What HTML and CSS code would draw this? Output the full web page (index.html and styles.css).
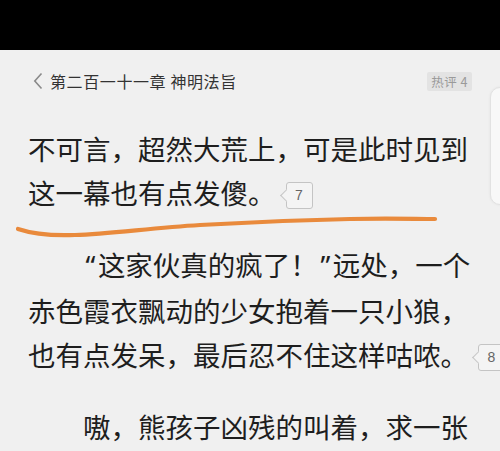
FILE: index.html
```html
<!DOCTYPE html>
<html lang="zh-CN">
<head>
<meta charset="utf-8">
<link rel="stylesheet" href="styles.css">
</head>
<body>
<div class="statusbar"></div>
<div class="header">
  <svg class="back" width="10" height="18" viewBox="0 0 10 18"><path d="M8.5 1.5 L1.8 9 L8.5 16.5" fill="none" stroke="#8a8a8a" stroke-width="1.6"/></svg>
  <span class="title">第二百一十一章 神明法旨</span>
  <span class="hot">热评 4</span>
</div>
<div class="content">
  <p class="para">不可言，超然大荒上，可是此时见到<br>这一幕也有点发傻。<span class="note">7</span></p>
  <p class="para indent"><span class="q">“</span>这家伙真的疯了！<span class="q">”</span>远处，一个<br>赤色霞衣飘动的少女抱着一只小狼，<br>也有点发呆，最后忍不住这样咕哝。<span class="note">8</span></p>
  <p class="para indent">嗷，熊孩子凶残的叫着，求一张</p>
</div>
<div class="sidepanel"></div>
<svg class="scribble" width="500" height="451" viewBox="0 0 500 451">
  <path d="M18 229 C 30 233, 50 236, 75 235 C 110 234, 150 228, 200 225 C 250 222, 300 220, 350 219 C 390 218, 415 219, 435 219" fill="none" stroke="#e98a3c" stroke-width="4.2" stroke-linecap="round"/>
</svg>
</body>
</html>
```

FILE: styles.css
```css
html, body {
  margin: 0;
  padding: 0;
}
body {
  width: 500px;
  height: 451px;
  overflow: hidden;
  background: #f0f0f0;
  position: relative;
  font-family: "Noto Sans CJK SC", "Noto Sans", sans-serif;
  color: #1e1e1e;
}
.statusbar {
  height: 50px;
  background: #000;
}
.header {
  height: 62px;
  display: flex;
  align-items: center;
  padding-left: 33px;
  padding-right: 28px;
}
.back {
  margin-right: 7px;
  flex: none;
}
.title {
  font-size: 16px;
  color: #333;
  white-space: nowrap;
  letter-spacing: 0.6px;
}
.hot {
  margin-left: auto;
  background: #e3e3e3;
  color: #9a9a9a;
  font-size: 12.5px;
  height: 19px;
  line-height: 19px;
  padding: 0 4px;
  border-radius: 2px;
  letter-spacing: 0.5px;
}
.content {
  padding-left: 28px;
  padding-top: 14px;
}
.para {
  margin: 0 0 28px 0;
  font-size: 27.5px;
  line-height: 44px;
  white-space: nowrap;
}
.para:last-child {
  margin-bottom: 0;
}
.indent {
  text-indent: 2em;
}
.q {
  font-family: "Noto Sans", "DejaVu Sans", sans-serif;
  padding: 0 2.5px;
}
.note {
  display: inline-flex;
  align-items: center;
  justify-content: center;
  position: relative;
  width: 25px;
  height: 25px;
  margin-left: 10px;
  border: 1px solid #c4c4c4;
  border-radius: 3px;
  background: #f4f4f4;
  color: #666;
  font-family: "Liberation Sans", sans-serif;
  font-size: 14px;
  line-height: 1;
  text-indent: 0;
  vertical-align: 4px;
}
.note::before {
  content: "";
  position: absolute;
  left: -5px;
  top: 8px;
  width: 8px;
  height: 8px;
  background: #f4f4f4;
  border-left: 1px solid #c4c4c4;
  border-bottom: 1px solid #c4c4c4;
  transform: rotate(45deg);
}
.sidepanel {
  position: absolute;
  left: 490px;
  top: 87px;
  width: 30px;
  height: 116px;
  background: #f8f8f8;
  border: 1px solid #e2e2e2;
  border-radius: 10px;
  box-shadow: 0 0 3px rgba(0,0,0,0.06);
}
.scribble {
  position: absolute;
  left: 0;
  top: 0;
  pointer-events: none;
}
```
